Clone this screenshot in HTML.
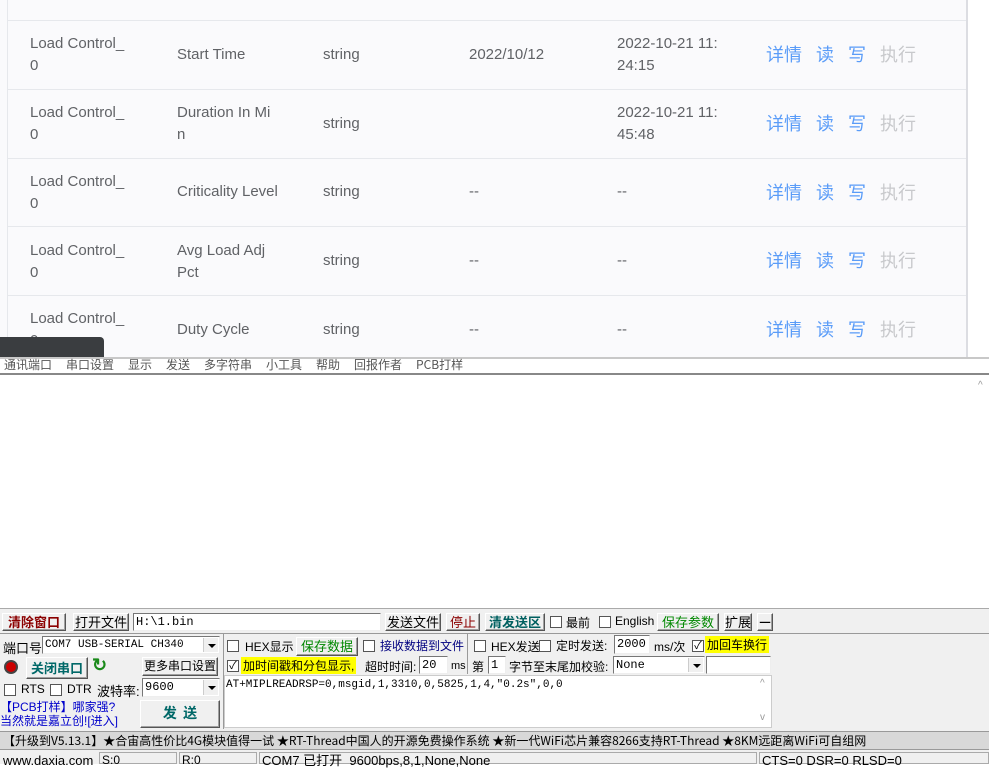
<!DOCTYPE html>
<html><head><meta charset="utf-8"><style>
*{margin:0;padding:0;box-sizing:border-box}
body{width:989px;height:764px;position:relative;overflow:hidden;background:#fff;font-family:"Liberation Sans","Noto Sans CJK SC",sans-serif}
.a{position:absolute;white-space:nowrap}
.t{font-size:15px;color:#606266;line-height:22px}
.op{font-size:18px;color:#5a9cf8;line-height:22px}
.dis{color:#c8c9cc}
.hl{position:absolute;left:7px;width:959px;height:1px;background:#e6e8ec}
.s{font-family:"SimSun","Noto Sans CJK SC",sans-serif;font-size:12px;color:#000;line-height:14px}
.btn{position:absolute;background:#f0f0f0;border:1px solid;border-color:#fff #555 #555 #fff;box-shadow:inset -1px -1px #a0a0a0;font-size:13px;text-align:center;font-family:"Noto Sans CJK SC",sans-serif;white-space:nowrap;overflow:hidden}
.inp{position:absolute;background:#fff;border:1px solid;border-color:#777 #eee #eee #777;font-size:12px;padding-left:2px;font-family:"Liberation Mono","Noto Sans CJK SC",monospace;line-height:16px;white-space:nowrap}
.cb{position:absolute;width:12px;height:12px;border:1px solid #555;background:#fff;font-size:11px;line-height:10px;text-align:center}
.dd{position:absolute;right:1px;top:1px;width:15px;bottom:1px;background:#f0f0f0;border-left:1px solid #ccc}
.dd:after{content:"";position:absolute;left:4px;top:6px;border:4px solid transparent;border-top:4px solid #000}
.m{position:absolute;top:356px;font-size:12px;color:#555;font-family:'Noto Sans CJK SC',sans-serif}
</style></head><body>
<div class="a" style="left:0;top:0;width:967px;height:357px;background:#fafafc"></div>
<div class="a" style="left:7px;top:0;width:1px;height:357px;background:#e6e8ec"></div>
<div class="a" style="left:966px;top:0;width:2px;height:357px;background:#dcdde2"></div>
<div class="hl" style="top:20px"></div><div class="hl" style="top:89px"></div><div class="hl" style="top:158px"></div><div class="hl" style="top:226px"></div><div class="hl" style="top:295px"></div>

<div class="a t" style="left:30px;top:33px">Load Control_<br>0</div><div class="a t" style="left:177px;top:44px">Start Time</div><div class="a t" style="left:323px;top:44px">string</div><div class="a t" style="left:469px;top:44px">2022/10/12</div><div class="a t" style="left:617px;top:33px">2022-10-21 11:<br>24:15</div>
<div class="a t" style="left:30px;top:102px">Load Control_<br>0</div><div class="a t" style="left:177px;top:102px">Duration In Mi<br>n</div><div class="a t" style="left:323px;top:113px">string</div><div class="a t" style="left:617px;top:102px">2022-10-21 11:<br>45:48</div>
<div class="a t" style="left:30px;top:171px">Load Control_<br>0</div><div class="a t" style="left:177px;top:181px">Criticality Level</div><div class="a t" style="left:323px;top:181px">string</div><div class="a t" style="left:469px;top:181px">--</div><div class="a t" style="left:617px;top:181px">--</div>
<div class="a t" style="left:30px;top:240px">Load Control_<br>0</div><div class="a t" style="left:177px;top:240px">Avg Load Adj<br>Pct</div><div class="a t" style="left:323px;top:250px">string</div><div class="a t" style="left:469px;top:250px">--</div><div class="a t" style="left:617px;top:250px">--</div>
<div class="a t" style="left:30px;top:308px">Load Control_<br>0</div><div class="a t" style="left:177px;top:319px">Duty Cycle</div><div class="a t" style="left:323px;top:319px">string</div><div class="a t" style="left:469px;top:319px">--</div><div class="a t" style="left:617px;top:319px">--</div>

<div class="a op" style="left:766px;top:44px">详情</div><div class="a op" style="left:816px;top:44px">读</div><div class="a op" style="left:848px;top:44px">写</div><div class="a op dis" style="left:880px;top:44px">执行</div>
<div class="a op" style="left:766px;top:113px">详情</div><div class="a op" style="left:816px;top:113px">读</div><div class="a op" style="left:848px;top:113px">写</div><div class="a op dis" style="left:880px;top:113px">执行</div>
<div class="a op" style="left:766px;top:182px">详情</div><div class="a op" style="left:816px;top:182px">读</div><div class="a op" style="left:848px;top:182px">写</div><div class="a op dis" style="left:880px;top:182px">执行</div>
<div class="a op" style="left:766px;top:250px">详情</div><div class="a op" style="left:816px;top:250px">读</div><div class="a op" style="left:848px;top:250px">写</div><div class="a op dis" style="left:880px;top:250px">执行</div>
<div class="a op" style="left:766px;top:319px">详情</div><div class="a op" style="left:816px;top:319px">读</div><div class="a op" style="left:848px;top:319px">写</div><div class="a op dis" style="left:880px;top:319px">执行</div>

<div class="a" style="left:0;top:357px;width:989px;height:18px;background:#fff;border-top:2px solid #c8c8c8;border-bottom:2px solid #888"></div>
<div class="m" style="left:4px">通讯端口</div><div class="m" style="left:66px">串口设置</div><div class="m" style="left:128px">显示</div><div class="m" style="left:166px">发送</div><div class="m" style="left:204px">多字符串</div><div class="m" style="left:266px">小工具</div><div class="m" style="left:316px">帮助</div><div class="m" style="left:354px">回报作者</div><div class="m" style="left:416px">PCB打样</div>
<div class="a" style="left:0;top:337px;width:104px;height:20px;background:#3a3d40;border-radius:0 4px 0 0"></div>
<div class="a" style="left:978px;top:380px;font-size:10px;color:#999">^</div>

<div class="a" style="left:0;top:608px;width:989px;height:156px;background:#f0f0f0;border-top:1px solid #aaa"></div>
<div class="btn" style="left:2px;top:613px;width:64px;height:18px;color:#8b0000;font-weight:bold;line-height:15px">清除窗口</div>
<div class="btn" style="left:73px;top:613px;width:56px;height:18px;line-height:15px">打开文件</div>
<div class="inp" style="left:133px;top:613px;width:248px;height:18px">H:\1.bin</div>
<div class="btn" style="left:385px;top:613px;width:56px;height:18px;line-height:15px">发送文件</div>
<div class="btn" style="left:446px;top:613px;width:34px;height:18px;line-height:15px;color:#8b0000">停止</div>
<div class="btn" style="left:485px;top:613px;width:60px;height:18px;line-height:15px;color:#006060;font-weight:bold">清发送区</div>
<div class="cb" style="left:550px;top:616px"></div><div class="a" style="left:566px;top:614px;font-size:12px">最前</div>
<div class="cb" style="left:599px;top:616px"></div><div class="a" style="left:615px;top:614px;font-size:12px">English</div>
<div class="btn" style="left:657px;top:613px;width:62px;height:18px;line-height:15px;color:#080">保存参数</div>
<div class="btn" style="left:724px;top:613px;width:28px;height:18px;line-height:15px">扩展</div>
<div class="btn" style="left:757px;top:613px;width:16px;height:18px;line-height:14px;font-weight:bold">—</div>

<div class="a" style="left:0;top:633px;width:989px;height:1px;background:#999"></div>
<div class="a" style="left:3px;top:638px;font-size:13px">端口号</div>
<div class="inp" style="left:42px;top:636px;width:178px;height:18px;font-size:11px">COM7 USB-SERIAL CH340<div class="dd"></div></div>
<div class="a" style="left:4px;top:660px;width:14px;height:14px;border-radius:50%;background:#c00;border:2px solid #444"></div>
<div class="btn" style="left:26px;top:657px;width:62px;height:22px;line-height:19px;color:#006868;font-weight:bold">关闭串口</div>
<div class="a" style="left:92px;top:655px;font-size:18px;color:#1a8a1a;font-weight:bold">↻</div>
<div class="btn" style="left:142px;top:657px;width:76px;height:19px;line-height:16px;font-size:12px">更多串口设置</div>
<div class="cb" style="left:4px;top:684px"></div><div class="a" style="left:21px;top:682px;font-size:12px">RTS</div>
<div class="cb" style="left:50px;top:684px"></div><div class="a" style="left:67px;top:682px;font-size:12px">DTR</div>
<div class="a" style="left:97px;top:681px;font-size:13px">波特率:</div>
<div class="inp" style="left:142px;top:678px;width:78px;height:19px">9600<div class="dd"></div></div>
<div class="a" style="left:0;top:700px;font-size:12px;color:#0000cc;line-height:14px">【PCB打样】哪家强?<br>当然就是嘉立创![进入]</div>
<div class="btn" style="left:140px;top:700px;width:80px;height:28px;line-height:25px;color:#006868;font-weight:bold;font-size:14px">发&nbsp;&nbsp;送</div>

<div class="a" style="left:223px;top:634px;width:1px;height:95px;background:#999"></div>
<div class="cb" style="left:227px;top:640px"></div><div class="a" style="left:245px;top:638px;font-size:12px">HEX显示</div>
<div class="btn" style="left:296px;top:637px;width:62px;height:19px;line-height:16px;color:#080">保存数据</div>
<div class="cb" style="left:363px;top:640px"></div><div class="a" style="left:380px;top:637px;font-size:12px;color:#000080">接收数据到文件</div>
<div class="cb" style="left:227px;top:660px">✓</div><div class="a" style="left:241px;top:657px;font-size:12px;background:#ff0;padding:0 2px">加时间戳和分包显示,</div>
<div class="a" style="left:365px;top:658px;font-size:12px">超时时间:</div>
<div class="inp" style="left:419px;top:656px;width:29px;height:18px">20</div><div class="a" style="left:451px;top:660px;font-size:11px">ms</div>
<div class="a" style="left:467px;top:634px;width:1px;height:40px;background:#999"></div>
<div class="cb" style="left:474px;top:640px"></div><div class="a" style="left:491px;top:638px;font-size:12px">HEX发送</div>
<div class="cb" style="left:539px;top:640px"></div><div class="a" style="left:556px;top:637px;font-size:12px">定时发送:</div>
<div class="inp" style="left:614px;top:635px;width:36px;height:19px">2000</div>
<div class="a" style="left:654px;top:638px;font-size:12px">ms/次</div>
<div class="cb" style="left:692px;top:640px">✓</div><div class="a" style="left:705px;top:636px;font-size:12px;background:#ff0;padding:0 2px">加回车换行</div>
<div class="a" style="left:472px;top:658px;font-size:12px">第</div>
<div class="inp" style="left:488px;top:656px;width:18px;height:18px">1</div>
<div class="a" style="left:509px;top:658px;font-size:12px">字节至末尾加校验:</div>
<div class="inp" style="left:613px;top:656px;width:92px;height:18px">None<div class="dd"></div></div>
<div class="inp" style="left:706px;top:656px;width:65px;height:18px"></div>
<div class="a" style="left:224px;top:675px;width:548px;height:53px;background:#fff;border:1px solid #ccc"></div>
<div class="a s" style="left:226px;top:678px;font-family:'Liberation Mono',monospace;font-size:11px">AT+MIPLREADRSP=0,msgid,1,3310,0,5825,1,4,"0.2s",0,0</div>
<div class="a" style="left:760px;top:678px;font-size:10px;color:#999">^</div>
<div class="a" style="left:760px;top:712px;font-size:10px;color:#999">v</div>

<div class="a" style="left:0;top:731px;width:989px;height:19px;background:#d8d8d8;border-top:1px solid #999;border-bottom:1px solid #999"></div>
<div class="a" style="left:3px;top:733px;font-size:12px;font-family:'Noto Sans CJK SC',sans-serif;line-height:15px">【升级到V5.13.1】★合宙高性价比4G模块值得一试 ★RT-Thread中国人的开源免费操作系统 ★新一代WiFi芯片兼容8266支持RT-Thread ★8KM远距离WiFi可自组网</div>
<div class="a" style="left:0;top:752px;width:989px;height:12px;background:#f0f0f0"></div>
<div class="a" style="left:3px;top:753px;font-size:13px">www.daxia.com</div>
<div class="a" style="left:99px;top:752px;width:78px;height:12px;border:1px solid #aaa;font-size:12px;padding-left:2px">S:0</div>
<div class="a" style="left:179px;top:752px;width:78px;height:12px;border:1px solid #aaa;font-size:12px;padding-left:2px">R:0</div>
<div class="a" style="left:259px;top:752px;width:498px;height:12px;border:1px solid #aaa;font-size:13px;padding-left:2px;line-height:15px">COM7 已打开&nbsp; 9600bps,8,1,None,None</div>
<div class="a" style="left:759px;top:752px;width:230px;height:12px;border:1px solid #aaa;font-size:13px;padding-left:2px;line-height:15px">CTS=0 DSR=0 RLSD=0</div>
</body></html>
